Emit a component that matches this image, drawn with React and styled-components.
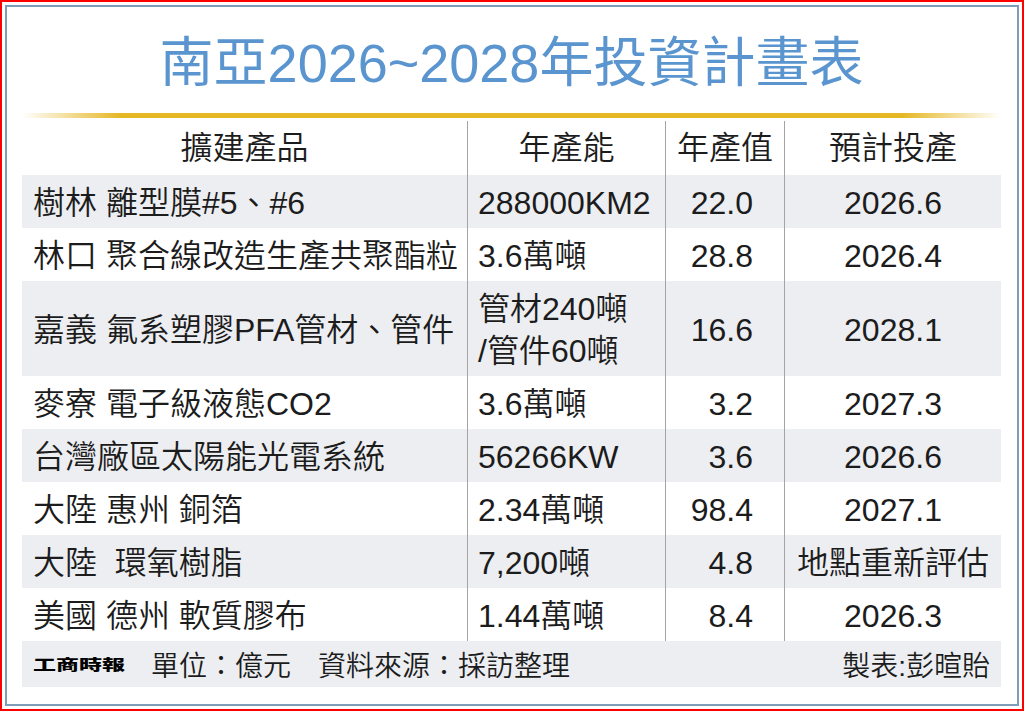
import React from 'react';
import styled, { createGlobalStyle } from 'styled-components';

const GlobalStyle = createGlobalStyle`
    body {
        margin: 0;
        background: #fff;
        font-family: 'Liberation Sans', 'Noto Sans CJK TC', sans-serif;
        font-weight: 350;
        color: #1c1c1c;
    }
`;

const Frame = styled.div`
    width: 1024px;
    height: 711px;
    box-sizing: border-box;
    border: 2px solid #f00;
    padding: 3px;
    background: #fff;
`;

const Panel = styled.div`
    height: 100%;
    box-sizing: border-box;
    border: 2px solid #7f9db9;
    padding: 0 16px 0 15px;
    display: flex;
    flex-direction: column;
`;

const Title = styled.h1`
    margin: 29px 0 23px;
    font-size: 54px;
    line-height: 54px;
    font-weight: 400;
    text-align: center;
    color: #5a95cf;
    white-space: nowrap;
`;

const GoldRule = styled.div`
    height: 5px;
    background: linear-gradient(
        to right,
        rgba(232, 186, 38, 0) 0%,
        #e6b826 10%,
        #e6b826 90%,
        rgba(232, 186, 38, 0) 100%
    );
`;

const Row = styled.div`
    display: grid;
    grid-template-columns: 445px 198px 119px 217px;
    height: ${(p) => p.$height || 53}px;
    margin-top: ${(p) => p.$offset || 0}px;
    background: ${(p) => (p.$shade ? '#eceef2' : '#fff')};
`;

const Cell = styled.div`
    display: flex;
    align-items: center;
    justify-content: ${(p) => p.$justify || 'flex-start'};
    box-sizing: border-box;
    padding: ${(p) => (p.$head ? '0' : '2px')} ${(p) => p.$right || 0}px 0 ${(p) => p.$left || 0}px;
    font-size: 32px;
    line-height: ${(p) => p.$lh || 32}px;
    white-space: nowrap;
    border-left: ${(p) => (p.$first ? 'none' : '1px solid #a4a4a4')};
`;

const Footer = styled.div`
    display: flex;
    justify-content: space-between;
    align-items: center;
    height: 46px;
    padding: 0 11px;
    background: #eceef2;
    font-size: 28px;
    white-space: nowrap;
`;

const FooterNotes = styled.div`
    display: flex;
    align-items: center;
    gap: 27px;
`;

const Logo = styled.span`
    display: inline-block;
    font-size: 23px;
    font-weight: 900;
    color: #000;
    transform: scaleY(0.62);
    margin-right: -1px;
`;

const rows = [
    { name: '樹林 離型膜#5、#6', cap: ['288000KM2'], val: '22.0', start: '2026.6' },
    { name: '林口 聚合線改造生產共聚酯粒', cap: ['3.6萬噸'], val: '28.8', start: '2026.4' },
    { name: '嘉義 氟系塑膠PFA管材、管件', cap: ['管材240噸', '/管件60噸'], val: '16.6', start: '2028.1', tall: true },
    { name: '麥寮 電子級液態CO2', cap: ['3.6萬噸'], val: '3.2', start: '2027.3' },
    { name: '台灣廠區太陽能光電系統', cap: ['56266KW'], val: '3.6', start: '2026.6' },
    { name: '大陸 惠州 銅箔', cap: ['2.34萬噸'], val: '98.4', start: '2027.1' },
    { name: '大陸\u00a0\u00a0環氧樹脂', cap: ['7,200噸'], val: '4.8', start: '地點重新評估' },
    { name: '美國 德州 軟質膠布', cap: ['1.44萬噸'], val: '8.4', start: '2026.3' },
];

export default function App() {
    return (
        <>
            <GlobalStyle />
            <Frame>
                <Panel>
                    <Title>南亞2026~2028年投資計畫表</Title>
                    <GoldRule />
                    <Row $height={54} $offset={3}>
                        <Cell $head $first $justify="center">擴建產品</Cell>
                        <Cell $head $justify="center">年產能</Cell>
                        <Cell $head $justify="center">年產值</Cell>
                        <Cell $head $justify="center">預計投產</Cell>
                    </Row>
                    {rows.map((r, i) => (
                        <Row key={i} $shade={i % 2 === 0} $height={r.tall ? 95 : 53}>
                            <Cell $first $left={11}>{r.name}</Cell>
                            <Cell $left={10} $lh={r.cap.length > 1 ? 42 : 32}>
                                <div>
                                    {r.cap.map((c, j) => (
                                        <div key={j}>{c}</div>
                                    ))}
                                </div>
                            </Cell>
                            <Cell $justify="flex-end" $right={31}>{r.val}</Cell>
                            <Cell $justify="center">{r.start}</Cell>
                        </Row>
                    ))}
                    <Footer>
                        <FooterNotes>
                            <Logo>工商時報</Logo>
                            <span>單位：億元</span>
                            <span>資料來源：採訪整理</span>
                        </FooterNotes>
                        <span>製表:彭暄貽</span>
                    </Footer>
                </Panel>
            </Frame>
        </>
    );
}
